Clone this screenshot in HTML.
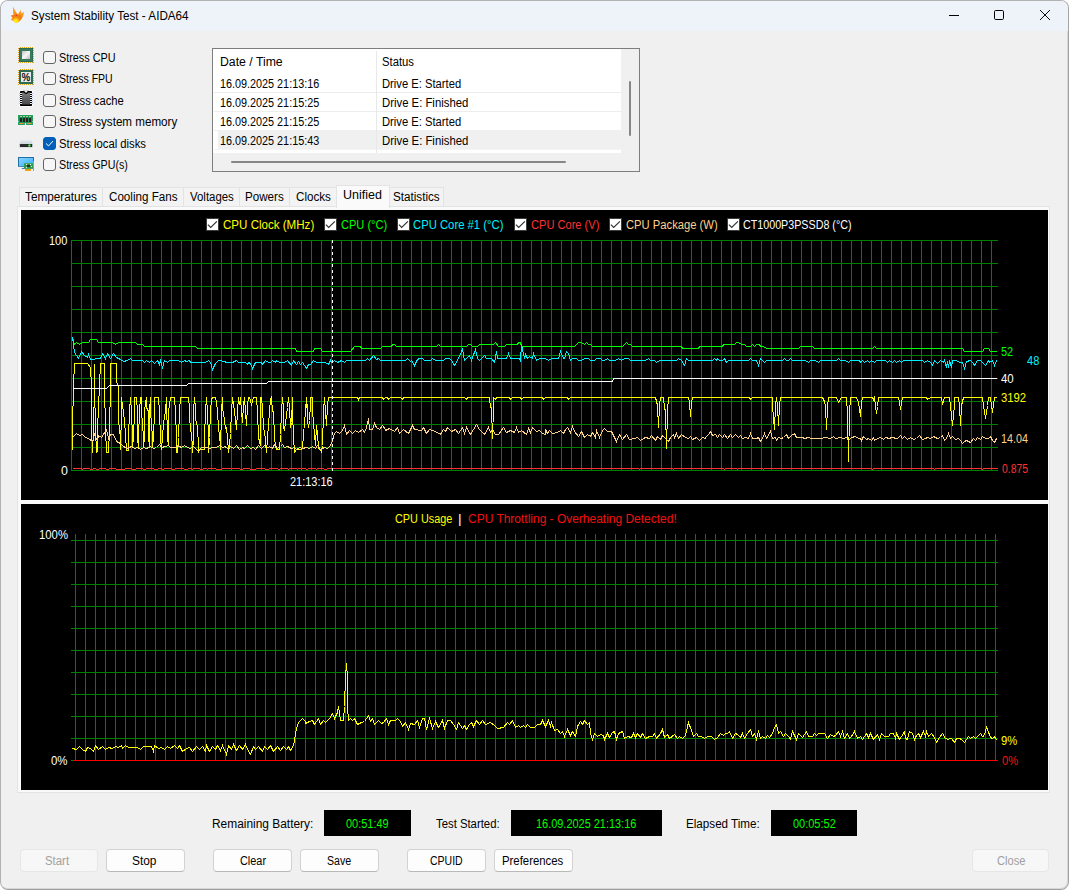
<!DOCTYPE html>
<html lang="en">
<head>
<meta charset="utf-8">
<title>System Stability Test - AIDA64</title>
<style>
html,body{margin:0;padding:0;background:#fff;}
body{width:1069px;height:890px;position:relative;overflow:hidden;font-family:"Liberation Sans",sans-serif;font-size:12px;}
#win{position:absolute;left:0;top:0;width:1067px;height:888px;border:1px solid #b2b2b2;border-right-color:#a4a4a4;border-bottom-color:#a0a0a0;border-radius:8px;background:#f0f0f0;overflow:hidden;box-sizing:content-box;box-shadow:inset -1px -1px 0 rgba(0,0,0,.10);}
#tb{position:absolute;left:0;top:0;width:1067px;height:30px;background:#eef3f9;}
.a{position:absolute;}
.t{position:absolute;white-space:pre;line-height:normal;transform-origin:0 0;}
.cb{position:absolute;left:43px;width:11px;height:11px;border:1px solid #646464;border-radius:3px;background:#f6f6f6;}
.cb.on{background:#005fb8;border-color:#005fb8;}
.btn{position:absolute;top:849px;height:21px;border:1px solid #d2d2d2;border-bottom-color:#b9b9b9;border-radius:4px;background:#fdfdfd;}
.btn.dis{background:#f7f7f7;border-color:#e6e6e6;}
.blk{position:absolute;top:810px;height:26px;background:#000;}
.tv{top:187px;width:1px;height:19px;background:#e3e3e3;}
</style>
</head>
<body>
<div id="win">
<div id="tb"></div>
</div>

<!-- tab page frame -->
<div class="a" style="left:17px;top:206px;width:1033px;height:587px;background:#fafafa;border:1px solid #e3e3e3;box-sizing:border-box;"></div>
<!-- tabs -->
<div class="a" style="left:19px;top:187px;width:425px;height:20px;background:#f3f3f3;border-top:1px solid #e3e3e3;box-sizing:border-box;"></div>
<div class="a tv" style="left:19px;"></div>
<div class="a tv" style="left:102px;"></div>
<div class="a tv" style="left:183px;"></div>
<div class="a tv" style="left:239px;"></div>
<div class="a tv" style="left:289px;"></div>
<div class="a tv" style="left:443px;"></div>
<div class="a" style="left:17px;top:206px;width:1033px;height:1px;background:#e3e3e3;"></div>
<div class="a" style="left:336px;top:185px;width:54px;height:23px;background:#fafafa;border:1px solid #e3e3e3;border-bottom:none;box-sizing:border-box;"></div>

<!-- list box -->
<div class="a" style="left:212px;top:48px;width:426px;height:122px;border:1px solid #7e7e7e;background:#f0f0f0;"></div>
<div class="a" style="left:213px;top:49px;width:408px;height:104px;background:#fff;"></div>
<div class="a" style="left:214px;top:92px;width:407px;height:1px;background:#ededed;"></div>
<div class="a" style="left:214px;top:111px;width:407px;height:1px;background:#ededed;"></div>
<div class="a" style="left:214px;top:130px;width:407px;height:1px;background:#ededed;"></div>
<div class="a" style="left:218px;top:130px;width:403px;height:19px;background:#f0f0f0;"></div>
<div class="a" style="left:214px;top:149px;width:407px;height:1px;background:#f4f4f4;"></div>
<div class="a" style="left:376px;top:51px;width:1px;height:102px;background:#e8e8e8;"></div>
<div class="a" style="left:231px;top:161px;width:335px;height:2px;background:#868686;border-radius:1px;"></div>
<div class="a" style="left:629px;top:81px;width:2px;height:55px;background:#868686;border-radius:1px;"></div>

<!-- checkboxes -->
<div class="cb" style="top:51px"></div>
<div class="cb" style="top:72px"></div>
<div class="cb" style="top:94px"></div>
<div class="cb" style="top:115px"></div>
<div class="cb on" style="top:137px"></div>
<div class="cb" style="top:158px"></div>

<!-- bottom -->
<div class="blk" style="left:324px;width:87px;"></div>
<div class="blk" style="left:511px;width:151px;"></div>
<div class="blk" style="left:771px;width:86px;"></div>
<div class="btn dis" style="left:20px;width:76px;"></div>
<div class="btn" style="left:106px;width:77px;"></div>
<div class="btn" style="left:213px;width:77px;"></div>
<div class="btn" style="left:300px;width:77px;"></div>
<div class="btn" style="left:407px;width:77px;"></div>
<div class="btn" style="left:494px;width:77px;"></div>
<div class="btn dis" style="left:972px;width:75px;"></div>

<svg width="1069" height="890" viewBox="0 0 1069 890" style="position:absolute;left:0;top:0" shape-rendering="crispEdges">
<rect x="21" y="210" width="1027" height="290" fill="#000"/>
<rect x="21" y="504" width="1027" height="286" fill="#000"/>
<path d="M71.5 240V471M81.5 240V471M91.5 240V471M101.5 240V471M111.5 240V471M121.5 240V471M131.5 240V471M141.5 240V471M151.5 240V471M161.5 240V471M171.5 240V471M181.5 240V471M191.5 240V471M201.5 240V471M211.5 240V471M221.5 240V471M231.5 240V471M241.5 240V471M251.5 240V471M261.5 240V471M271.5 240V471M281.5 240V471M291.5 240V471M301.5 240V471M311.5 240V471M321.5 240V471M331.5 240V471M341.5 240V471M351.5 240V471M361.5 240V471M371.5 240V471M381.5 240V471M391.5 240V471M401.5 240V471M411.5 240V471M421.5 240V471M431.5 240V471M441.5 240V471M451.5 240V471M461.5 240V471M471.5 240V471M481.5 240V471M491.5 240V471M501.5 240V471M511.5 240V471M521.5 240V471M531.5 240V471M541.5 240V471M551.5 240V471M561.5 240V471M571.5 240V471M581.5 240V471M591.5 240V471M601.5 240V471M611.5 240V471M621.5 240V471M631.5 240V471M641.5 240V471M651.5 240V471M661.5 240V471M671.5 240V471M681.5 240V471M691.5 240V471M701.5 240V471M711.5 240V471M721.5 240V471M731.5 240V471M741.5 240V471M751.5 240V471M761.5 240V471M771.5 240V471M781.5 240V471M791.5 240V471M801.5 240V471M811.5 240V471M821.5 240V471M831.5 240V471M841.5 240V471M851.5 240V471M861.5 240V471M871.5 240V471M881.5 240V471M891.5 240V471M901.5 240V471M911.5 240V471M921.5 240V471M931.5 240V471M941.5 240V471M951.5 240V471M961.5 240V471M971.5 240V471M981.5 240V471M991.5 240V471M71 240.5H998M71 263.5H998M71 286.5H998M71 309.5H998M71 332.5H998M71 355.5H998M71 378.5H998M71 401.5H998M71 424.5H998M71 447.5H998M71 470.5H998" stroke="#008000" stroke-width="1" fill="none"/>
<path d="M75.5 534V761M85.5 534V761M95.5 534V761M105.5 534V761M115.5 534V761M125.5 534V761M135.5 534V761M145.5 534V761M155.5 534V761M165.5 534V761M175.5 534V761M185.5 534V761M195.5 534V761M205.5 534V761M215.5 534V761M225.5 534V761M235.5 534V761M245.5 534V761M255.5 534V761M265.5 534V761M275.5 534V761M285.5 534V761M295.5 534V761M305.5 534V761M315.5 534V761M325.5 534V761M335.5 534V761M345.5 534V761M355.5 534V761M365.5 534V761M375.5 534V761M385.5 534V761M395.5 534V761M405.5 534V761M415.5 534V761M425.5 534V761M435.5 534V761M445.5 534V761M455.5 534V761M465.5 534V761M475.5 534V761M485.5 534V761M495.5 534V761M505.5 534V761M515.5 534V761M525.5 534V761M535.5 534V761M545.5 534V761M555.5 534V761M565.5 534V761M575.5 534V761M585.5 534V761M595.5 534V761M605.5 534V761M615.5 534V761M625.5 534V761M635.5 534V761M645.5 534V761M655.5 534V761M665.5 534V761M675.5 534V761M685.5 534V761M695.5 534V761M705.5 534V761M715.5 534V761M725.5 534V761M735.5 534V761M745.5 534V761M755.5 534V761M765.5 534V761M775.5 534V761M785.5 534V761M795.5 534V761M805.5 534V761M815.5 534V761M825.5 534V761M835.5 534V761M845.5 534V761M855.5 534V761M865.5 534V761M875.5 534V761M885.5 534V761M895.5 534V761M905.5 534V761M915.5 534V761M925.5 534V761M935.5 534V761M945.5 534V761M955.5 534V761M965.5 534V761M975.5 534V761M985.5 534V761M995.5 534V761M71 540.5H998M71 562.5H998M71 584.5H998M71 606.5H998M71 628.5H998M71 650.5H998M71 672.5H998M71 694.5H998M71 716.5H998M71 738.5H998M71 760.5H998" stroke="#008000" stroke-width="1" fill="none"/>
<g transform="translate(0.5,0.5)">
<polyline points="72,449 72,428 73,385 74,363 87,363 90,367 91,385 91,429 92,452 93,429 94,385 94,363 94,385 95,429 96,452 97,451 97,429 99,385 100,363 104,363 104,385 105,429 106,452 108,452 109,429 110,385 110,363 116,363 116,382 118,385 118,420 120,438 120,449 121,411 121,397 122,406 123,411 124,421 125,434 126,450 128,450 128,437 129,411 130,397 131,411 132,437 132,446 133,437 134,411 134,397 136,397 137,411 137,437 138,448 138,437 139,411 140,397 141,397 141,411 143,437 143,446 144,437 144,411 145,402 146,397 146,407 148,411 148,437 149,445 149,411 150,397 150,411 152,437 152,446 153,437 154,411 154,397 158,397 159,411 160,437 161,449 162,437 163,422 165,411 166,397 166,411 167,427 167,437 168,445 168,411 170,397 174,397 175,411 176,437 176,452 177,452 178,437 179,411 180,397 188,397 189,407 189,418 190,427 192,445 192,452 193,437 193,411 194,397 195,407 195,418 197,427 198,445 198,452 199,449 204,449 204,437 205,411 206,397 207,411 208,437 208,452 209,437 210,411 211,399 212,397 215,397 216,402 217,411 218,427 220,445 220,449 221,411 222,397 222,407 224,420 225,428 226,427 227,437 228,452 229,445 230,433 231,411 232,397 233,404 234,411 236,429 237,411 238,397 239,404 240,397 241,411 242,422 243,404 244,397 245,411 246,425 247,404 248,397 249,397 251,404 253,397 256,397 257,411 258,437 260,445 260,397 261,397 262,407 263,427 265,438 266,452 267,437 269,411 270,399 271,397 272,411 273,411 274,437 275,445 276,449 279,449 280,434 281,411 282,397 283,407 283,427 284,430 285,422 287,407 288,397 289,407 290,427 291,422 292,397 292,411 293,437 294,452 296,449 301,449 302,448 303,434 305,411 306,397 306,407 307,404 307,420 308,427 309,420 310,404 310,397 312,397 312,411 314,434 315,445 316,425 317,433 318,448 320,449 321,452 322,445 323,411 324,397 325,411 326,425 327,404 328,397 332,397 333,397 357,397 358,399 359,397 382,397 383,399 385,397 387,397 388,399 390,397 400,397 402,399 403,397 464,397 466,399 467,397 489,397 490,407 491,407 492,438 493,407 493,397 495,399 496,397 509,397 510,399 512,397 520,397 521,399 523,397 542,397 543,399 545,397 567,397 568,399 570,397 655,397 657,405 658,427 659,405 660,397 663,397 664,408 665,410 666,448 667,410 668,397 688,397 689,402 690,416 691,402 692,397 705,397 749,397 750,399 752,397 772,397 772,405 774,429 775,405 776,397 777,405 778,425 779,405 780,397 822,397 824,401 825,406 826,429 827,406 828,397 836,397 838,402 841,397 846,397 847,413 848,461 849,413 850,397 856,397 858,402 860,416 861,402 862,397 872,397 873,399 874,397 875,406 876,413 877,406 878,397 898,397 899,402 900,409 901,402 902,397 926,397 927,399 930,397 941,397 942,404 944,397 949,397 950,405 952,425 954,405 954,397 958,397 959,405 960,425 961,405 963,397 982,397 983,405 985,418 987,405 988,397 990,397 991,405 992,412 993,404 994,397 996,397" stroke="#ffff00" stroke-width="1" fill="none"/>
<polyline points="72,337 74,344 76,342 79,344 82,342 88,342 90,339 96,339 98,342 112,342 115,344 118,342 135,342 137,344 142,344 144,346 195,346 197,348 225,348 295,348 296,351 313,351 314,348 320,348 322,351 350,351 354,346 360,346 361,348 380,348 382,346 385,346 391,346 392,344 394,344 396,346 436,346 438,344 440,346 466,346 468,344 470,344 472,346 477,346 479,344 493,344 495,342 498,346 504,346 506,344 517,344 518,342 520,342 521,346 545,346 574,346 578,342 581,342 584,344 586,342 588,344 590,344 592,346 622,346 626,342 628,344 630,344 632,346 681,346 682,348 698,348 699,346 705,346 722,346 723,344 734,344 736,342 738,342 741,344 744,344 746,346 750,346 752,344 754,346 756,344 759,344 760,346 763,346 766,348 798,348 800,346 812,346 814,348 859,348 860,348 872,348 874,346 876,348 962,348 964,351 982,351 984,348 988,348 990,351 996,351" stroke="#00ff00" stroke-width="1" fill="none"/>
<polyline points="72,337 74,352 78,358 81,351 84,355 87,357 88,354 90,359 100,358 102,353 105,358 107,353 110,358 113,353 116,357 120,359 123,361 127,360 130,358 132,360 142,360 144,362 146,360 149,362 151,360 154,363 157,360 159,364 160,360 162,367 164,360 167,362 169,360 178,360 181,362 184,360 186,361 189,360 190,362 205,362 208,360 210,362 212,369 215,363 218,360 225,361 225,362 232,362 236,360 238,362 245,362 247,364 248,362 250,363 252,368 255,362 261,362 262,364 265,360 268,362 270,362 272,360 275,362 276,360 279,362 284,362 287,360 291,365 293,360 296,364 298,361 300,364 302,362 306,368 308,364 310,364 313,360 316,362 325,362 328,364 330,360 331,362 334,360 337,362 341,360 344,362 346,360 365,360 367,358 369,360 373,355 376,359 378,358 380,360 385,360 405,360 407,358 410,361 411,360 414,365 417,359 419,358 422,358 424,360 430,360 432,358 435,360 443,360 445,358 449,358 451,360 454,365 458,358 462,349 464,360 466,358 469,355 471,360 475,349 477,358 479,360 481,358 484,355 486,358 491,358 494,362 496,351 497,358 506,358 508,353 510,358 519,358 520,360 521,344 524,358 525,354 527,358 529,356 532,358 533,353 536,360 539,358 545,358 548,360 551,358 558,358 560,351 563,358 564,358 566,351 568,353 570,360 572,358 576,358 578,360 581,360 584,358 588,358 590,360 594,360 596,358 600,358 602,360 604,360 607,358 609,360 615,360 618,358 621,360 624,358 628,358 630,360 645,360 648,358 650,360 654,360 656,362 659,360 676,360 678,358 681,360 684,365 686,358 688,360 700,360 705,360 712,360 714,358 716,360 717,358 719,360 722,360 724,358 726,362 728,360 748,360 750,358 752,360 756,360 758,365 760,358 762,360 764,362 766,360 782,360 784,358 786,360 788,360 790,358 792,360 805,360 808,362 810,360 815,360 818,362 820,360 836,360 838,358 840,360 845,360 848,362 850,360 859,360 860,362 862,360 864,362 867,360 869,362 871,360 874,362 876,360 885,360 887,362 889,360 892,362 894,360 896,362 899,360 901,362 903,360 922,360 924,362 927,360 930,362 932,365 934,360 937,363 940,360 943,362 944,360 946,367 947,361 948,367 949,360 951,367 952,360 956,360 959,362 962,362 964,368 966,361 970,360 972,362 974,365 977,360 980,360 985,365 988,360 989,362 992,360 994,365 996,360" stroke="#00f0ff" stroke-width="1" fill="none"/>
<path d="M72.5 468H81.5M81.5 469H82.5M82.5 468H89.5M89.5 469H92.5M92.5 468H95.5M95.5 469H98.5M98.5 468H105.5M105.5 469H108.5M108.5 468H115.5M115.5 469H124.5M124.5 468H131.5M131.5 469H135.5M135.5 468H142.5M142.5 469H145.5M145.5 468H153.5M153.5 469H157.5M157.5 468H161.5M161.5 469H163.5M163.5 468H171.5M171.5 469H174.5M174.5 468H183.5M183.5 469H187.5M187.5 468H191.5M191.5 469H192.5M192.5 468H199.5M199.5 469H202.5M202.5 468H206.5M206.5 469H207.5M207.5 468H215.5M215.5 469H221.5M221.5 468H230.5M230.5 469H231.5M231.5 468H239.5M239.5 469H242.5M242.5 468H249.5M249.5 469H255.5M255.5 468H264.5M264.5 469H268.5M268.5 468H277.5M277.5 469H279.5M279.5 468H287.5M287.5 469H288.5M288.5 468H296.5M296.5 469H297.5M297.5 468H300.5M300.5 469H301.5M301.5 468H305.5M305.5 469H307.5M307.5 468H315.5M315.5 469H316.5M316.5 468H323.5M323.5 469H326.5M326.5 468H330.5M330.5 468H333.5" stroke="#ff3030" stroke-width="1" fill="none"/>
<polyline points="333,468 638,468 639,469 640,468 672,468 673,469 674,468 723,468 724,469 725,468 736,468 737,469 738,468 762,468 763,469 764,468 871,468 872,469 873,468 933,468 934,469 935,468 981,468 982,469 983,468 997,468" stroke="#ff3030" stroke-width="1" fill="none"/>
<polyline points="72,437 76,433 79,435 82,434 85,437 88,438 92,441 94,434 97,441 98,435 101,437 106,429 108,438 110,434 113,434 116,441 120,443 123,446 127,448 131,446 134,448 137,447 140,449 143,447 146,448 150,446 153,448 156,447 159,444 161,447 165,446 168,445 170,447 175,447 177,445 181,447 184,445 187,447 190,448 193,446 195,448 198,451 201,447 206,447 209,448 212,447 216,447 219,445 222,447 225,446 225,447 228,448 230,446 233,448 236,445 239,449 242,447 244,448 247,445 250,448 253,447 255,449 258,445 261,448 264,445 266,448 269,446 272,448 274,444 277,448 280,446 282,444 284,447 287,446 291,448 294,447 296,449 299,447 302,448 306,447 309,448 312,446 315,448 317,445 320,449 324,447 327,448 329,446 331,443 334,433 336,431 339,433 342,430 344,425 346,434 349,430 352,433 355,430 358,432 362,429 364,432 366,427 368,418 369,429 372,429 374,423 376,427 379,429 382,425 385,429 385,430 389,428 394,431 397,427 399,433 403,429 408,433 412,425 414,429 421,430 423,427 426,433 429,429 435,431 440,434 443,429 445,431 447,427 451,431 455,429 458,433 462,427 464,433 466,427 470,434 473,429 476,424 479,429 484,434 488,427 490,432 492,429 495,434 498,434 503,427 506,432 510,430 514,432 516,427 518,432 521,430 526,434 528,428 530,432 532,427 536,431 539,430 542,433 545,434 545,429 547,433 549,430 552,433 557,432 560,430 563,433 565,429 567,427 570,432 572,426 574,431 578,436 581,431 584,437 587,434 590,436 592,432 595,437 596,430 599,437 602,430 604,428 607,431 611,431 614,437 616,441 619,434 622,439 626,434 629,439 634,438 637,437 640,440 645,437 649,438 651,435 655,440 657,436 660,439 662,435 665,438 668,441 670,437 673,434 674,437 676,433 678,438 681,434 685,437 688,438 690,436 692,439 696,437 699,440 702,437 705,438 705,437 708,434 710,431 712,435 715,434 717,437 719,434 722,437 724,434 727,438 730,434 732,437 735,434 738,437 740,435 742,438 745,437 748,438 750,433 752,438 756,438 758,437 760,441 762,438 764,433 766,438 770,431 772,438 775,437 776,440 778,437 781,438 783,437 786,434 788,438 791,435 794,433 796,437 802,437 804,438 808,437 811,438 815,438 821,438 824,437 830,438 833,436 835,438 840,437 843,438 846,437 848,440 851,437 855,436 858,438 860,438 861,440 863,436 866,439 868,438 871,440 873,437 874,440 877,438 880,437 883,439 885,437 889,438 891,437 897,438 900,435 902,438 904,436 907,439 910,437 913,439 916,438 919,435 922,439 925,438 927,437 930,438 933,436 937,438 940,437 942,435 944,440 946,438 948,433 950,438 952,436 955,439 958,438 960,440 962,443 964,441 966,440 970,442 973,438 975,440 977,437 980,439 982,436 985,438 988,438 990,436 992,440 994,442 996,438" stroke="#ffd28c" stroke-width="1" fill="none"/>
<polyline points="72,388 106,388 109,385 186,385 188,383 225,383 266,383 268,381 385,381 545,381 612,381 613,378 705,378 865,378 996,378" stroke="#ffffff" stroke-width="1" fill="none"/>
<path d="M332 239.5V471" stroke="#fff" stroke-width="1.4" stroke-dasharray="3 3" fill="none"/>
<polyline points="72,760 997,760" stroke="#ff0000" stroke-width="1.4" fill="none"/>
<polyline points="72,748 76,749 79,746 82,749 85,751 87,747 90,748 93,751 95,745 98,749 102,746 105,749 108,747 112,748 115,746 118,747 121,745 122,748 125,745 128,747 137,747 140,749 143,746 151,746 153,751 154,745 158,748 161,747 164,749 167,746 170,748 174,745 177,748 179,745 182,751 186,748 189,747 192,751 196,746 199,749 202,746 205,751 206,745 209,751 212,746 215,749 217,745 220,750 222,745 226,754 228,745 231,749 233,744 236,750 239,745 242,749 245,744 248,751 250,754 253,746 255,749 258,746 262,751 264,746 267,749 270,745 273,751 277,746 280,750 283,746 286,749 288,746 290,750 293,745 296,728 298,722 302,718 305,721 305,723 309,721 312,720 314,724 318,718 320,724 323,720 325,722 329,718 332,713 334,718 337,712 338,706 340,720 343,720 344,706 345,676 346,663 347,678 347,706 348,720 350,718 352,720 354,718 357,724 361,722 364,721 366,718 368,715 370,721 372,718 374,724 378,720 381,723 383,722 386,718 388,724 390,720 395,720 397,718 400,721 402,726 405,722 408,729 410,723 414,724 417,720 419,727 422,718 424,718 426,729 429,718 432,728 435,721 438,727 442,720 444,728 447,720 450,720 453,724 456,729 458,722 462,728 464,725 466,729 469,724 471,722 473,726 476,720 479,724 482,720 485,724 490,722 494,725 497,728 503,727 507,722 509,724 512,720 515,727 518,725 520,727 523,725 525,727 527,724 530,727 534,727 537,724 540,724 542,720 545,726 548,720 550,726 551,722 554,730 557,729 560,733 562,731 564,736 567,729 570,735 572,731 575,736 577,726 580,721 582,724 584,720 587,724 589,722 590,733 592,739 594,733 597,736 600,734 603,735 604,739 607,733 609,737 612,732 614,731 616,739 618,733 622,731 624,738 627,736 631,737 633,733 635,737 637,733 640,737 642,733 645,738 649,736 652,736 654,733 656,738 660,733 662,729 664,737 667,734 669,738 674,734 677,738 679,736 682,738 685,735 687,726 688,722 691,730 693,736 696,733 698,736 701,736 704,738 707,736 711,736 714,739 717,737 720,733 723,735 725,733 727,733 729,731 732,738 735,733 737,734 740,737 742,733 744,738 747,733 750,729 752,736 754,733 756,739 758,731 760,738 762,736 765,738 767,735 769,737 772,733 774,727 776,724 778,733 780,731 783,736 785,733 788,736 790,739 792,731 794,735 796,739 798,733 802,737 806,731 808,736 812,736 814,733 816,735 818,733 824,733 827,738 830,734 833,736 835,735 838,731 840,736 842,731 844,738 847,733 849,738 851,736 854,731 857,738 860,736 862,739 866,733 868,737 870,733 873,739 877,734 879,739 881,733 884,736 888,736 890,733 893,733 895,738 896,733 899,739 901,736 904,731 905,738 907,739 909,731 912,733 914,739 916,735 918,733 920,737 923,731 925,736 926,731 928,736 931,733 934,737 936,742 939,737 942,733 945,738 948,739 949,738 951,738 954,742 956,738 959,738 961,739 964,742 968,736 970,738 973,736 975,738 980,733 982,736 984,735 986,727 987,729 990,737 992,738 994,736 995,738 997,740" stroke="#ffff00" stroke-width="1" fill="none"/>
</g>
<rect x="206.5" y="218.5" width="12" height="12" fill="#fff" stroke="#3c3c3c" stroke-width="1"/><path d="M207.9 224.6l2.8 2.8 6.2-6.1" stroke="#303030" stroke-width="1.15" fill="none" shape-rendering="geometricPrecision"/>
<rect x="324.5" y="218.5" width="12" height="12" fill="#fff" stroke="#3c3c3c" stroke-width="1"/><path d="M325.9 224.6l2.8 2.8 6.2-6.1" stroke="#303030" stroke-width="1.15" fill="none" shape-rendering="geometricPrecision"/>
<rect x="397.5" y="218.5" width="12" height="12" fill="#fff" stroke="#3c3c3c" stroke-width="1"/><path d="M398.9 224.6l2.8 2.8 6.2-6.1" stroke="#303030" stroke-width="1.15" fill="none" shape-rendering="geometricPrecision"/>
<rect x="514.5" y="218.5" width="12" height="12" fill="#fff" stroke="#3c3c3c" stroke-width="1"/><path d="M515.9 224.6l2.8 2.8 6.2-6.1" stroke="#303030" stroke-width="1.15" fill="none" shape-rendering="geometricPrecision"/>
<rect x="609.5" y="218.5" width="12" height="12" fill="#fff" stroke="#3c3c3c" stroke-width="1"/><path d="M610.9 224.6l2.8 2.8 6.2-6.1" stroke="#303030" stroke-width="1.15" fill="none" shape-rendering="geometricPrecision"/>
<rect x="727.5" y="218.5" width="12" height="12" fill="#fff" stroke="#3c3c3c" stroke-width="1"/><path d="M728.9 224.6l2.8 2.8 6.2-6.1" stroke="#303030" stroke-width="1.15" fill="none" shape-rendering="geometricPrecision"/>
</svg>

<!-- icons + titlebar glyphs -->
<svg width="1069" height="200" viewBox="0 0 1069 200" style="position:absolute;left:0;top:0">
<!-- flame -->
<defs>
<radialGradient id="fl" gradientUnits="userSpaceOnUse" cx="15.800" cy="21.200" r="9">
<stop offset="0" stop-color="#fff614"/><stop offset=".22" stop-color="#ffd80c"/><stop offset=".42" stop-color="#f58f12"/><stop offset=".62" stop-color="#ea7a14"/><stop offset="1" stop-color="#fb9a18"/>
</radialGradient>
</defs>
<path d="M13.300 6.800C14.300 9.500 16 12.200 17.900 14.500C18.900 13 20.100 11.500 20.600 9.800C20.900 11.400 21.200 12.700 21.700 13.700C22.300 12.900 23 12.300 23.800 11.700C23.800 14 23.400 15.600 22.700 17.100C22.100 18.400 21.400 19.400 20.500 20.200C19.300 21.600 17.800 22.700 16.100 23.100C15.200 22.900 14.500 22.100 14 21.400C12.900 20.900 11.900 20.200 10.900 19.500C11.700 19.200 12.200 18.700 12.600 18.100C11.900 17.300 11.300 16.300 10.800 15.200C11.900 15.400 12.900 15.200 13.700 14.800C13.100 13.400 12.900 12 13.200 11C13.100 9.500 13.100 8.200 13.300 6.800Z" fill="url(#fl)"/>
<circle cx="16.400" cy="15.400" r=".7" fill="#f5321e"/>
<!-- window buttons -->
<path d="M949 15.500h10" stroke="#000" stroke-width="1" fill="none"/>
<rect x="994.500" y="10.500" width="9" height="9" rx="1.200" stroke="#000" stroke-width="1" fill="none"/>
<path d="M1040 10l10 10M1050 10l-10 10" stroke="#000" stroke-width=".95" fill="none"/>
<!-- checkmark disks -->
<path d="M46 143.500l2.500 2.400 4.500-4.800" stroke="#fff" stroke-width="1" fill="none"/>
<defs>
<linearGradient id="die" x1="0" y1="0" x2="1" y2="1"><stop offset="0" stop-color="#c4c4c4"/><stop offset=".5" stop-color="#f6f6f6"/><stop offset="1" stop-color="#bdbdbd"/></linearGradient>
<linearGradient id="chip" x1="0" y1="0" x2="0" y2="1"><stop offset="0" stop-color="#7c7c7c"/><stop offset="1" stop-color="#4a4a4a"/></linearGradient>
<linearGradient id="scr" x1="0" y1="0" x2="1" y2="1"><stop offset="0" stop-color="#86d2ff"/><stop offset=".55" stop-color="#5cc0ff"/><stop offset="1" stop-color="#2fa4f7"/></linearGradient>
<linearGradient id="hdd" x1="0" y1="0" x2="0" y2="1"><stop offset="0" stop-color="#e4e8ee"/><stop offset="1" stop-color="#cdd4dc"/></linearGradient>
</defs>
<!-- CPU icon -->
<g>
<rect x="18.500" y="47.500" width="15" height="15" fill="none" stroke="#dfa31c" stroke-width="1" stroke-dasharray="1 1" stroke-dashoffset="1" shape-rendering="crispEdges"/>
<rect x="19" y="48" width="14" height="14" fill="#2f6b50"/>
<rect x="20" y="49" width="12" height="12" fill="#3a7a5c"/>
<rect x="22" y="51" width="8" height="8" fill="url(#die)"/>
</g>
<!-- FPU icon -->
<g>
<rect x="18.500" y="69.500" width="15" height="15" fill="none" stroke="#dfa31c" stroke-width="1" stroke-dasharray="1 1" stroke-dashoffset="1" shape-rendering="crispEdges"/>
<rect x="19" y="70" width="14" height="14" fill="#2f6b50"/>
<rect x="21" y="72" width="10" height="10" fill="#e9e9e9"/>
<text x="26" y="81" font-size="11" font-family="Liberation Sans, sans-serif" text-anchor="middle" fill="#000" stroke="#000" stroke-width=".25" textLength="8.400" lengthAdjust="spacingAndGlyphs">%</text>
</g>
<!-- cache icon -->
<g>
<rect x="19" y="90" width="14" height="17" rx="1" fill="#fbfbfb"/>
<rect x="20" y="91" width="12" height="15" rx=".8" fill="#000"/>
<path d="M19 93.500h3.200M19 95.500h3.200M19 97.500h3.200M19 99.500h3.200M19 101.500h3.200M19 103.500h3.200M29.800 93.500h3.200M29.800 95.500h3.200M29.800 97.500h3.200M29.800 99.500h3.200M29.800 101.500h3.200M29.800 103.500h3.200" stroke="#e4e9f2" stroke-width="1" fill="none"/>
<path d="M19 93.500h1M19 95.500h1M19 97.500h1M19 99.500h1M19 101.500h1M19 103.500h1M32 93.500h1M32 95.500h1M32 97.500h1M32 99.500h1M32 101.500h1M32 103.500h1" stroke="#b4c0da" stroke-width="1" fill="none"/>
<rect x="22" y="92.500" width="8" height="12" fill="url(#chip)"/>
<path d="M23.300 90.800C23.800 95 28.200 95 28.700 90.800z" fill="#000"/>
<path d="M24.300 90.500C24.700 93.300 27.300 93.300 27.700 90.500z" fill="#f4f4f4"/>
</g>
<!-- memory icon -->
<g>
<rect x="17.500" y="114.300" width="16" height="11.400" fill="#f8f6f6"/>
<path d="M18 115h15v6l-.8 .600 .8 .600v2.800h-6.900v-2h-1.200v2h-6.900v-2.800l.8-.600-.8-.600z" fill="#23a060"/>
<path d="M19.300 116h3.400v6.500h-3.400zM22.500 116h3.400v6.500h-3.400zM25.600 116h3.400v6.500h-3.400zM28.700 116h3.400v6.500h-3.400z" fill="#1c7e4a" opacity=".55"/>
<rect x="20" y="116" width="2" height="1" fill="#a8d78c"/><rect x="23" y="116" width="2" height="1" fill="#a8d78c"/><rect x="26" y="116" width="2" height="1" fill="#a8d78c"/><rect x="29" y="116" width="2" height="1" fill="#a8d78c"/>
<rect x="20" y="118" width="2" height="4" fill="#2a1d22"/><rect x="23" y="118" width="2" height="4" fill="#2a1d22"/><rect x="26" y="118" width="2" height="4" fill="#2a1d22"/><rect x="29" y="118" width="2" height="4" fill="#2a1d22"/>
<rect x="19.300" y="123" width="4.300" height="1.100" rx=".5" fill="#f09a35"/><rect x="27.300" y="123" width="4.400" height="1.100" rx=".5" fill="#f09a35"/>
</g>
<!-- disk icon -->
<g>
<path d="M20.800 140.200h10.500l1.300 3.800h-13.100z" fill="url(#hdd)"/>
<rect x="19.300" y="143.600" width="13.400" height="4.200" rx="1" fill="#d3d9e0"/>
<rect x="19.900" y="144" width="12.300" height="3" rx=".6" fill="#2b2a2b"/>
<circle cx="29.400" cy="145.500" r="1.500" fill="#2bd43a" opacity=".45"/>
<circle cx="29.400" cy="145.500" r=".9" fill="#5cff5c"/>
</g>
<!-- GPU icon -->
<g>
<rect x="17.500" y="156.300" width="17" height="11.200" fill="#f7f4f2"/>
<rect x="18" y="157" width="16" height="9.800" fill="#1f6fa6"/>
<rect x="19" y="158" width="14" height="8" fill="url(#scr)"/>
<rect x="21.800" y="168" width="2.400" height="1" fill="#5a6cc0"/>
<rect x="33" y="161" width="1" height="10" fill="#9a9a9a"/>
<rect x="24" y="163" width="9" height="5.900" fill="#2f9a55"/>
<rect x="24" y="163" width="9" height="1" fill="#46a868"/>
<rect x="27.200" y="165" width="2.700" height="2" rx=".5" fill="#2a1f22"/>
<rect x="26" y="164" width="1" height="1" fill="#e8e8e8"/><rect x="30" y="164" width="1" height="1" fill="#e8e8e8"/><rect x="31" y="166" width="1" height="1" fill="#e8e8e8"/><rect x="26" y="167" width="1" height="1" fill="#e8e8e8"/>
<rect x="25" y="169" width="6" height="1.900" fill="#f7a30c"/>
<path d="M26.500 169v1.900M28 169v1.900M29.500 169v1.900" stroke="#e08a00" stroke-width=".5"/>
</g>
</svg>

<span class="t" style="left:30.53px;top:9.1px;font-size:12px;color:#000;transform:scaleX(0.9739);">System Stability Test - AIDA64</span>
<span class="t" style="left:58.60px;top:51.1px;font-size:12px;color:#000;transform:scaleX(0.9016);">Stress CPU</span>
<span class="t" style="left:58.62px;top:72.1px;font-size:12px;color:#000;transform:scaleX(0.8750);">Stress FPU</span>
<span class="t" style="left:58.57px;top:94.1px;font-size:12px;color:#000;transform:scaleX(0.9338);">Stress cache</span>
<span class="t" style="left:58.53px;top:115.1px;font-size:12px;color:#000;transform:scaleX(0.9694);">Stress system memory</span>
<span class="t" style="left:58.56px;top:137.1px;font-size:12px;color:#000;transform:scaleX(0.9380);">Stress local disks</span>
<span class="t" style="left:58.61px;top:158.1px;font-size:12px;color:#000;transform:scaleX(0.8908);">Stress GPU(s)</span>
<span class="t" style="left:219.98px;top:55.1px;font-size:12px;color:#000;transform:scaleX(1.0217);">Date / Time</span>
<span class="t" style="left:382.26px;top:55.1px;font-size:12px;color:#000;transform:scaleX(0.9394);">Status</span>
<span class="t" style="left:220.10px;top:77.1px;font-size:12px;color:#000;transform:scaleX(0.9009);">16.09.2025 21:13:16</span>
<span class="t" style="left:382.27px;top:77.1px;font-size:12px;color:#000;transform:scaleX(0.9349);">Drive E: Started</span>
<span class="t" style="left:220.10px;top:96.1px;font-size:12px;color:#000;transform:scaleX(0.9009);">16.09.2025 21:15:25</span>
<span class="t" style="left:382.26px;top:96.1px;font-size:12px;color:#000;transform:scaleX(0.9444);">Drive E: Finished</span>
<span class="t" style="left:220.10px;top:115.1px;font-size:12px;color:#000;transform:scaleX(0.9009);">16.09.2025 21:15:25</span>
<span class="t" style="left:382.27px;top:115.1px;font-size:12px;color:#000;transform:scaleX(0.9349);">Drive E: Started</span>
<span class="t" style="left:220.10px;top:134.1px;font-size:12px;color:#000;transform:scaleX(0.9009);">16.09.2025 21:15:43</span>
<span class="t" style="left:382.26px;top:134.1px;font-size:12px;color:#000;transform:scaleX(0.9444);">Drive E: Finished</span>
<span class="t" style="left:25.30px;top:190.1px;font-size:12px;color:#000;transform:scaleX(0.9808);">Temperatures</span>
<span class="t" style="left:109.20px;top:190.1px;font-size:12px;color:#000;transform:scaleX(0.9690);">Cooling Fans</span>
<span class="t" style="left:190.00px;top:190.1px;font-size:12px;color:#000;transform:scaleX(0.9522);">Voltages</span>
<span class="t" style="left:245.23px;top:190.1px;font-size:12px;color:#000;transform:scaleX(0.9667);">Powers</span>
<span class="t" style="left:296.20px;top:190.1px;font-size:12px;color:#000;transform:scaleX(0.9667);">Clocks</span>
<span class="t" style="left:343.46px;top:188.1px;font-size:12px;color:#000;transform:scaleX(1.0417);">Unified</span>
<span class="t" style="left:393.33px;top:190.1px;font-size:12px;color:#000;transform:scaleX(0.9723);">Statistics</span>
<span class="t" style="left:223.00px;top:218.1px;font-size:12px;color:#ffff00;transform:scaleX(0.9638);">CPU Clock (MHz)</span>
<span class="t" style="left:340.70px;top:218.1px;font-size:12px;color:#00ff00;transform:scaleX(0.9220);">CPU (°C)</span>
<span class="t" style="left:413.20px;top:218.1px;font-size:12px;color:#00f0ff;transform:scaleX(0.9406);">CPU Core #1 (°C)</span>
<span class="t" style="left:531.20px;top:218.1px;font-size:12px;color:#ff3030;transform:scaleX(0.9233);">CPU Core (V)</span>
<span class="t" style="left:625.60px;top:218.1px;font-size:12px;color:#ffd28c;transform:scaleX(0.9351);">CPU Package (W)</span>
<span class="t" style="left:743.30px;top:218.1px;font-size:12px;color:#ffffff;transform:scaleX(0.8926);">CT1000P3PSSD8 (°C)</span>
<span class="t" style="left:48.88px;top:233.6px;font-size:12px;color:#ffffff;transform:scaleX(0.9158);">100</span>
<span class="t" style="left:61.00px;top:463.6px;font-size:12px;color:#ffffff;transform:scaleX(1.0333);">0</span>
<span class="t" style="left:290.00px;top:474.6px;font-size:12px;color:#ffffff;transform:scaleX(0.9130);">21:13:16</span>
<span class="t" style="left:1001.08px;top:344.7px;font-size:12px;color:#00ff00;transform:scaleX(0.9167);">52</span>
<span class="t" style="left:1026.50px;top:353.6px;font-size:12px;color:#00f0ff;transform:scaleX(0.9231);">48</span>
<span class="t" style="left:1001.00px;top:372.1px;font-size:12px;color:#ffffff;transform:scaleX(0.9538);">40</span>
<span class="t" style="left:1000.76px;top:390.7px;font-size:12px;color:#ffff00;transform:scaleX(0.9400);">3192</span>
<span class="t" style="left:1001.10px;top:432.1px;font-size:12px;color:#ffd28c;transform:scaleX(0.8966);">14.04</span>
<span class="t" style="left:1002.00px;top:462.1px;font-size:12px;color:#ff3030;transform:scaleX(0.8667);">0.875</span>
<span class="t" style="left:395.00px;top:511.8px;font-size:12px;color:#ffff00;transform:scaleX(0.9048);">CPU Usage</span>
<span class="t" style="left:457.85px;top:511.8px;font-size:12px;color:#ffffff;transform:scaleX(1.1500);">|</span>
<span class="t" style="left:467.50px;top:511.8px;font-size:12px;color:#f21010;transform:scaleX(0.9976);">CPU Throttling - Overheating Detected!</span>
<span class="t" style="left:38.86px;top:527.8px;font-size:12px;color:#ffffff;transform:scaleX(0.9448);">100%</span>
<span class="t" style="left:51.00px;top:753.7px;font-size:12px;color:#ffffff;transform:scaleX(0.9529);">0%</span>
<span class="t" style="left:1001.30px;top:733.7px;font-size:12px;color:#ffff00;transform:scaleX(0.9353);">9%</span>
<span class="t" style="left:1001.50px;top:753.7px;font-size:12px;color:#ff1010;transform:scaleX(0.9235);">0%</span>
<span class="t" style="left:211.71px;top:817.0px;font-size:12px;color:#000;transform:scaleX(0.9930);">Remaining Battery:</span>
<span class="t" style="left:346.00px;top:817.0px;font-size:12px;color:#00ff00;transform:scaleX(0.9130);">00:51:49</span>
<span class="t" style="left:435.90px;top:817.0px;font-size:12px;color:#000;transform:scaleX(0.9439);">Test Started:</span>
<span class="t" style="left:536.09px;top:817.0px;font-size:12px;color:#00ff00;transform:scaleX(0.9110);">16.09.2025 21:13:16</span>
<span class="t" style="left:685.53px;top:817.0px;font-size:12px;color:#000;transform:scaleX(0.9703);">Elapsed Time:</span>
<span class="t" style="left:793.20px;top:817.0px;font-size:12px;color:#00ff00;transform:scaleX(0.9152);">00:05:52</span>
<span class="t" style="left:45.45px;top:854.1px;font-size:12px;color:#a0a0a0;transform:scaleX(0.9500);">Start</span>
<span class="t" style="left:132.41px;top:854.1px;font-size:12px;color:#000;transform:scaleX(0.9913);">Stop</span>
<span class="t" style="left:239.50px;top:854.1px;font-size:12px;color:#000;transform:scaleX(0.9069);">Clear</span>
<span class="t" style="left:326.52px;top:854.1px;font-size:12px;color:#000;transform:scaleX(0.8808);">Save</span>
<span class="t" style="left:429.70px;top:854.1px;font-size:12px;color:#000;transform:scaleX(0.8757);">CPUID</span>
<span class="t" style="left:502.25px;top:854.1px;font-size:12px;color:#000;transform:scaleX(0.9469);">Preferences</span>
<span class="t" style="left:997.00px;top:854.1px;font-size:12px;color:#a0a0a0;transform:scaleX(0.9267);">Close</span>
</body>
</html>
